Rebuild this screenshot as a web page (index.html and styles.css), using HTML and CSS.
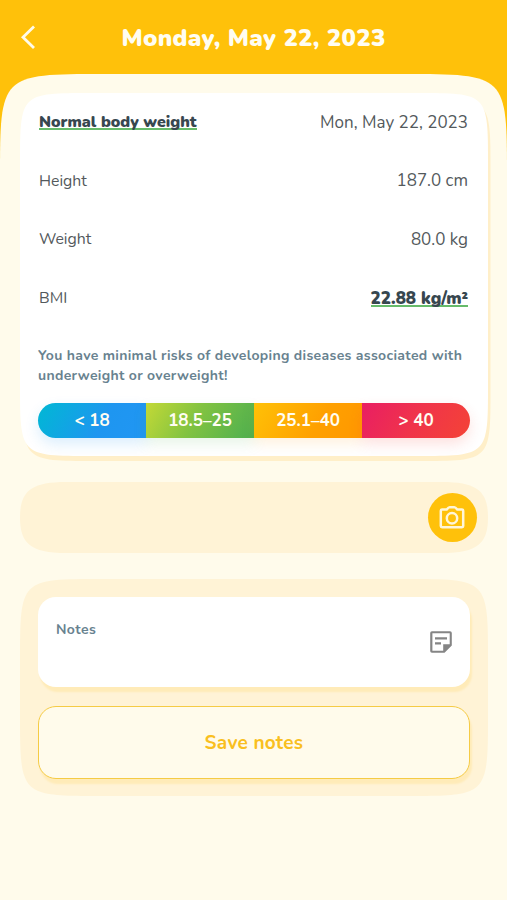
FILE: index.html
```html
<!DOCTYPE html>
<html lang="en">
<head>
<meta charset="utf-8">
<title>Monday, May 22, 2023</title>
<link rel="stylesheet" href="styles.css">
</head>
<body>
<header class="bar">
  <svg class="back" viewBox="0 0 16 26"><path d="M14 2.5 3 13.2 14 24" fill="none" stroke="#fffbea" stroke-width="2.8"/></svg>
  <h1 class="title"><span>Monday, May 22, 2023</span></h1>
</header>
<main class="sheet">
  <svg class="sheet-bg" viewBox="0 0 507 826"><path d="M0 826V104C0 0 0 0 104 0H403C507 0 507 0 507 104V826Z" fill="#fffbeb"/></svg>
  <section class="card result">
    <svg class="shape" viewBox="0 0 468 363">
      <path transform="translate(2.5 5)" d="M0 72C0 0 0 0 72 0H396C468 0 468 0 468 72V291C468 363 468 363 396 363H72C0 363 0 363 0 291Z" fill="#ffefc9"/>
      <path d="M0 72C0 0 0 0 72 0H396C468 0 468 0 468 72V291C468 363 468 363 396 363H72C0 363 0 363 0 291Z" fill="#fff"/>
    </svg>
    <div class="row"><b class="status">Normal body weight</b><span class="value date">Mon, May 22, 2023</span></div>
    <div class="row"><span class="label height">Height</span><span class="value cm">187.0 cm</span></div>
    <div class="row"><span class="label weight">Weight</span><span class="value kg">80.0 kg</span></div>
    <div class="row"><span class="label bmi">BMI</span><b class="status score">22.88 kg/m²</b></div>
    <p class="advice"><span class="line1">You have minimal risks of developing diseases associated with</span><br><span class="line2">underweight or overweight!</span></p>
    <div class="scale">
      <div class="seg blue"><span>&lt; 18</span></div>
      <div class="seg green"><span>18.5–25</span></div>
      <div class="seg orange"><span>25.1–40</span></div>
      <div class="seg red"><span>&gt; 40</span></div>
    </div>
  </section>
  <section class="card photo">
    <svg class="shape" viewBox="0 0 468 71"><path d="M0 35.5C0 10 10 0 46 0H422C458 0 468 10 468 35.5C468 61 458 71 422 71H46C10 71 0 61 0 35.5Z" fill="#fff3d6"/></svg>
    <button class="camera" aria-label="Add photo">
      <svg viewBox="0 0 26 24" width="26" height="24" fill="none" stroke="#fff6d8" stroke-width="2.5" stroke-linejoin="round"><path d="M3 3.6H7.6Q9.6 1.3 10.6 1.3H15.4Q16.4 1.3 18.4 3.6H23Q24.2 3.6 24.2 4.8V20Q24.2 21.2 23 21.2H3Q1.8 21.2 1.8 20V4.8Q1.8 3.6 3 3.6Z"/><circle cx="13" cy="12.2" r="5.2"/></svg>
    </button>
  </section>
  <section class="card notes">
    <svg class="shape" viewBox="0 0 468 217"><path d="M0 82C0 0 0 0 82 0H386C468 0 468 0 468 82V135C468 217 468 217 386 217H82C0 217 0 217 0 135Z" fill="#fff3d6"/></svg>
    <div class="field">
      <span class="hint">Notes</span>
      <svg class="note-icon" viewBox="0 0 24 24" width="24" height="24"><path d="M3 1.2H21A1.8 1.8 0 0 1 22.8 3V15.5L15.5 22.8H3A1.8 1.8 0 0 1 1.2 21V3A1.8 1.8 0 0 1 3 1.2ZM3.4 3.3V20.7H14.2V14.2H20.7V3.3ZM6 7.3H18V9.4H6ZM6 12.3H12V14.4H6Z" fill="#858585" fill-rule="evenodd"/></svg>
    </div>
    <button class="save"><span>Save notes</span></button>
  </section>
</main>
</body>
</html>
```
FILE: styles.css
```css
* { box-sizing: border-box; }
body {
  margin: 0;
  width: 507px;
  height: 900px;
  overflow: hidden;
  background: #ffc10a;
  color: #53595c;
  font-family: Nunito, Lato, "Open Sans", sans-serif;
}
button { font-family: inherit; padding: 0; border: 0; }
.bar {
  height: 74px;
  display: grid;
  grid-template-columns: 56px 1fr 56px;
  align-items: center;
}
.back { width: 16px; height: 26px; margin-left: 20px; }
.title {
  margin: 0;
  padding-top: 1px;
  text-align: center;
  font-size: 24px;
  line-height: 30px;
  font-weight: 900;
  color: #fffdf2;
  letter-spacing: .3px;
  white-space: nowrap;
}
.sheet {
  position: relative;
  height: 826px;
  padding: 19px 19px 0 20px;
  display: flex;
  flex-direction: column;
}
.sheet-bg { position: absolute; inset: 0; width: 507px; height: 826px; }
.card { position: relative; width: 468px; }
.shape { position: absolute; inset: 0; width: 100%; height: 100%; overflow: visible; }
.card > :not(.shape) { position: relative; }

.result { height: 363px; padding: 0 18px; }
.row {
  height: 58.6px;
  display: flex;
  align-items: center;
  justify-content: space-between;
  padding: 0 2px 0 1px;
  white-space: nowrap;
}
.status {
  font-size: 15.9px;
  line-height: 16px;
  height: 16px;
  font-weight: 900;
  color: #37474f;
  border-bottom: 2px solid #66bb6a;
}
.score { font-size: 17px; line-height: 17px; height: 17px; }
.label { font-size: 15.8px; }
.value { font-size: 17px; }
.advice {
  margin: 19px 0 0;
  font-size: 14px;
  line-height: 19.5px;
  font-weight: 700;
  letter-spacing: .32px;
  color: #68828f;
  white-space: nowrap;
}
.scale {
  display: flex;
  height: 35px;
  margin-top: 18px;
  border-radius: 18px;
}
.seg {
  flex: 1;
  display: flex;
  align-items: center;
  justify-content: center;
  color: #fffdf2;
  font-size: 17px;
  font-weight: 700;
}
.blue { background: linear-gradient(120deg, #00b8d4, #1e96f0 60%, #2196f3); border-radius: 18px 0 0 18px; box-shadow: 0 6px 14px rgba(33,150,243,.16); }
.green { background: linear-gradient(120deg, #c3d936, #82c341 45%, #4caf50); box-shadow: 0 6px 14px rgba(76,175,80,.13); }
.orange { background: linear-gradient(120deg, #ffc107, #ffa000 60%, #ff9800); box-shadow: 0 6px 14px rgba(255,152,0,.13); }
.red { background: linear-gradient(120deg, #e91e63, #f0344a 50%, #f44336); border-radius: 0 18px 18px 0; box-shadow: 0 6px 14px rgba(244,67,54,.16); }

.photo {
  height: 71px;
  margin-top: 26px;
  padding-right: 11.5px;
  display: flex;
  align-items: center;
  justify-content: flex-end;
}
.camera {
  width: 49px;
  height: 49px;
  border-radius: 50%;
  background: #ffc10a;
  display: flex;
  align-items: center;
  justify-content: center;
}

.notes { height: 217px; margin-top: 26px; padding: 18px; }
.field {
  height: 90px;
  padding: 24px 17px 0 18px;
  border-radius: 18px;
  background: #fff;
  box-shadow: 2px 5px 2px #ffebb8;
  display: flex;
  justify-content: space-between;
}
.hint { font-size: 14px; line-height: 18px; font-weight: 700; letter-spacing: .4px; color: #68828f; }
.note-icon { margin-top: 9px; }
.save {
  display: block;
  width: 100%;
  height: 73px;
  margin-top: 19px;
  border: 1.5px solid #f5cb45;
  border-radius: 18px;
  background: #fffbeb;
  box-shadow: 2px 5px 2px #ffebb8;
  color: #f9bf20;
  font-size: 19px;
  font-weight: 700;
  letter-spacing: .25px;
}
```
